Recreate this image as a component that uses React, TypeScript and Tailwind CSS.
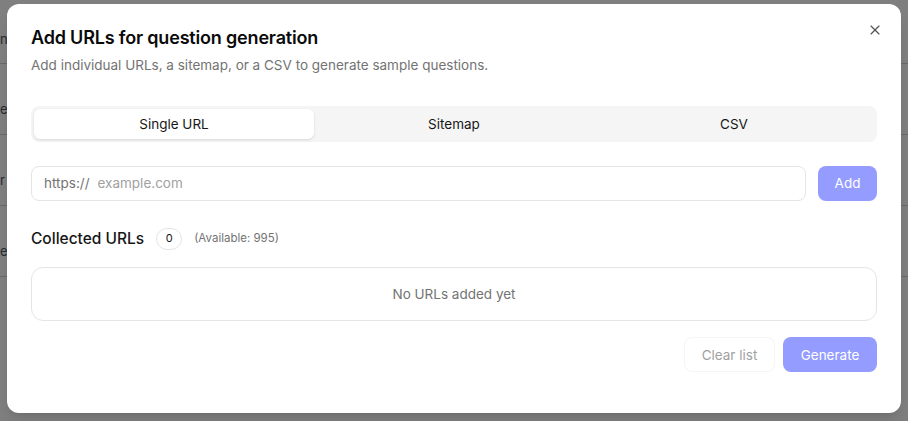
import { useState } from "react";
import { X } from "lucide-react";

const TABS = ["Single URL", "Sitemap", "CSV"];

// tail ends of the table cells on the page behind the dialog
const ROWS = ["n", "e", "r", "e"];

export default function App() {
  const [tab, setTab] = useState("Single URL");
  const [url, setUrl] = useState("");
  const [urls] = useState<string[]>([]);

  return (
    <div className="relative h-[421px] w-[908px] overflow-hidden bg-white" style={{ fontFamily: "Inter, 'Noto Sans', sans-serif" }}>
      {/* Page underneath */}
      <div className="flex flex-col">
        {ROWS.map((r, i) => (
          <div
            key={i}
            className={
              i === 0
                ? "flex h-[64px] items-end border-b border-gray-300 pb-[16px] text-[13px] leading-4 text-gray-600"
                : "flex h-[71px] items-end border-b border-gray-300 pb-[17px] text-[13px] leading-4 text-gray-600"
            }
          >
            {r}
          </div>
        ))}
      </div>

      {/* Overlay + dialog */}
      <div className="absolute inset-0 bg-black/50">
        <div className="mx-[7px] mt-[4px] h-[409px] rounded-xl bg-white px-6 pt-[22px] shadow-lg">
          <div className="flex items-start justify-between">
            <div>
              <h2 className="text-[18px] font-semibold leading-[24px] tracking-[-0.01em] text-neutral-950">Add URLs for question generation</h2>
              <p className="mt-[5px] text-[13.5px] leading-5 text-neutral-500">Add individual URLs, a sitemap, or a CSV to generate sample questions.</p>
            </div>
            <button className="-mr-[6px] -mt-[4px] text-neutral-600">
              <X size={16} strokeWidth={1.75} />
            </button>
          </div>

          {/* Tabs */}
          <div className="mt-[31px] grid h-9 grid-cols-3 rounded-lg bg-neutral-100 p-[3px]">
            {TABS.map((t) => (
              <button
                key={t}
                onClick={() => setTab(t)}
                className={
                  t === tab
                    ? "rounded-md bg-white text-[13.5px] text-neutral-900 shadow-sm"
                    : "rounded-md text-[13.5px] text-neutral-900"
                }
              >
                {t}
              </button>
            ))}
          </div>

          {/* URL input */}
          <div className="mt-6 flex gap-3">
            <div className="flex h-[35px] flex-1 items-center rounded-lg border border-neutral-200 px-3 text-[13.5px]">
              <span className="text-neutral-500">https://</span>
              <input
                value={url}
                onChange={(e) => setUrl(e.target.value)}
                placeholder="example.com"
                className="ml-2 flex-1 bg-transparent text-neutral-900 outline-none placeholder:text-neutral-400"
              />
            </div>
            <button className="h-[35px] w-[59px] rounded-lg bg-[#949cff] text-[13.5px] text-white">Add</button>
          </div>

          {/* Collected list */}
          <div className="mt-[26px] flex items-center">
            <span className="text-[15.5px] font-medium text-neutral-900">Collected URLs</span>
            <span className="ml-3 flex h-[22px] w-[26px] items-center justify-center rounded-full border border-neutral-200 text-[11px] text-neutral-900">
              {urls.length}
            </span>
            <span className="ml-3 text-[11.5px] text-neutral-500">(Available: 995)</span>
          </div>

          <div className="mt-[17px] flex h-[54px] items-center justify-center rounded-xl border border-neutral-200 text-[13.5px] text-neutral-500">
            No URLs added yet
          </div>

          <div className="mt-4 flex justify-end gap-2">
            <button className="h-[35px] w-[91px] rounded-lg border border-neutral-100 text-[13.5px] text-neutral-400">Clear list</button>
            <button className="h-[35px] w-[94px] rounded-lg bg-[#949cff] text-[13.5px] text-white">Generate</button>
          </div>
        </div>
      </div>
    </div>
  );
}
